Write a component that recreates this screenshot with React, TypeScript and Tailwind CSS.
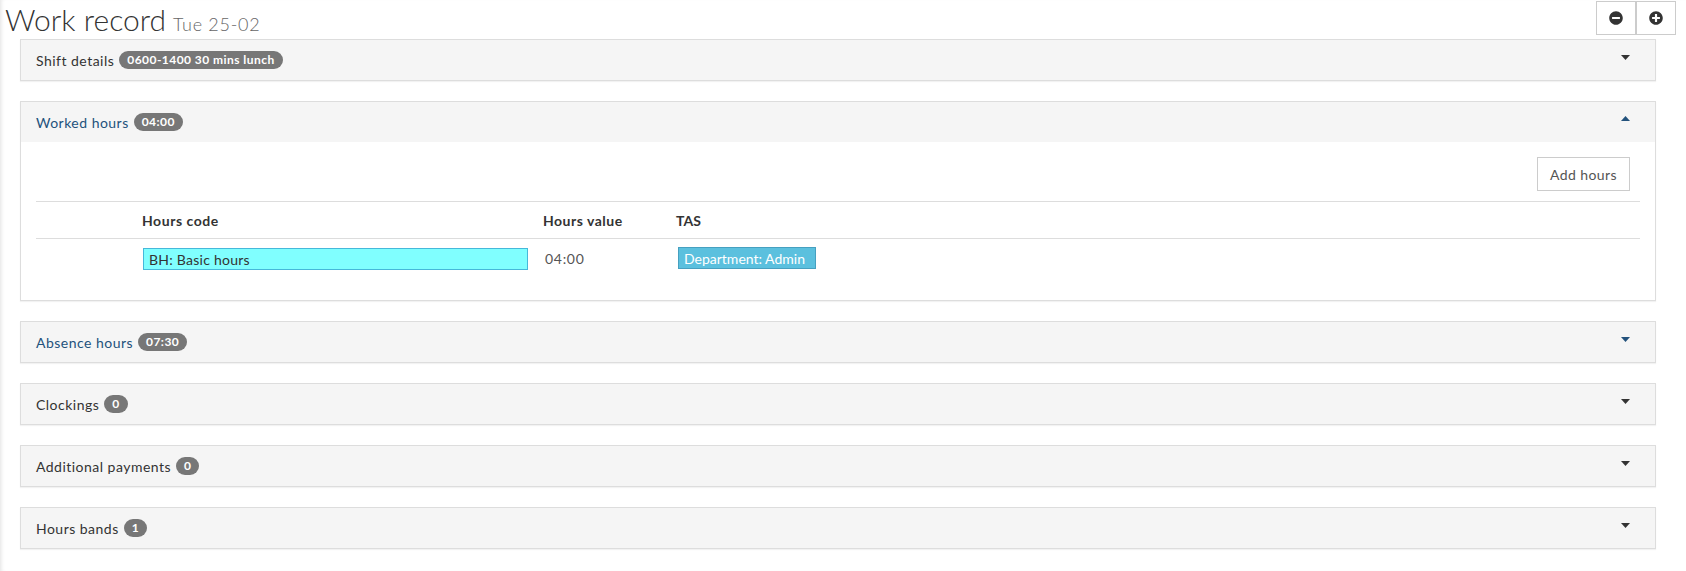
import React from "react";
import { FaMinusCircle, FaPlusCircle } from "react-icons/fa";

function Caret({ up, blue }: { up?: boolean; blue?: boolean }) {
  return (
    <svg width="9" height="5" viewBox="0 0 9 5" className={blue ? "text-[#23527c]" : "text-[#333333]"}>
      <path d={up ? "M0 5L4.5 0L9 5Z" : "M0 0H9L4.5 5Z"} fill="currentColor" />
    </svg>
  );
}

function Badge({ children }: { children: React.ReactNode }) {
  return (
    <span className="ml-[5px] inline-block rounded-[10px] bg-[#777777] px-[8px] py-[3px] text-[12px] font-bold leading-[12px] tracking-[0.45px] text-white">
      {children}
    </span>
  );
}

function Heading({ label, badge, open, blue }: { label: string; badge: string; open?: boolean; blue?: boolean }) {
  return (
    <div className="flex h-10 items-start justify-between bg-[#f5f5f5] pl-[15px] pr-[25px]">
      <div className={`mt-[10px] flex h-5 items-center text-[14px] ${blue ? "text-[#23527c]" : "text-[#333333]"}`}>
        <span className="tracking-[0.48px]">{label}</span>
        <Badge>{badge}</Badge>
      </div>
      <div className={open ? "mt-[14px]" : "mt-[15px]"}>
        <Caret up={open} blue={blue} />
      </div>
    </div>
  );
}

function Panel({ children }: { children: React.ReactNode }) {
  return (
    <section className="mb-5 border border-[#dddddd] bg-white shadow-[0_1px_1px_rgba(0,0,0,0.05)]">{children}</section>
  );
}

export default function App() {
  return (
    <div className="h-[571px] w-[1686px] overflow-hidden bg-white pl-[20px] pr-[30px] font-['Lato','Liberation_Sans',sans-serif] text-[14px] text-[#333333] shadow-[inset_4px_0_4px_-3px_rgba(0,0,0,0.12)]">
      <header className="-ml-[14px] -mr-[20px] flex h-[39px] items-start justify-between">
        <h1 className="mt-[1px] -ml-[1px] text-[30px] font-light leading-[36px] text-[#333333]">
          Work record
          <small className="ml-[7px] text-[18px] font-light tracking-[0.7px] text-[#666666]">Tue 25-02</small>
        </h1>
        <div className="mt-[1px] flex">
          <button className="flex h-[34px] w-10 items-center justify-center border border-[#cccccc] bg-white text-[14px] text-[#333333]">
            <FaMinusCircle />
          </button>
          <button className="flex h-[34px] w-10 items-center justify-center border border-[#cccccc] bg-white text-[14px] text-[#333333]">
            <FaPlusCircle />
          </button>
        </div>
      </header>

      <Panel>
        <Heading label="Shift details" badge="0600-1400 30 mins lunch" />
      </Panel>

      <Panel>
        <Heading label="Worked hours" badge="04:00" open blue />
        <div className="h-[158px] px-[15px] pt-[15px]">
          <div className="flex h-[44px] items-start justify-end pr-[10px]">
            <button className="h-[34px] w-[93px] border border-[#cccccc] bg-white text-[14px] tracking-[0.4px] text-[#555555]">
              Add hours
            </button>
          </div>
          <div className="grid h-[38px] grid-cols-[106px_401px_133px_1fr] items-center border-y border-[#dddddd] font-bold">
            <span className="col-start-2 tracking-[0.55px]">Hours code</span>
            <span className="tracking-[0.5px]">Hours value</span>
            <span className="tracking-[0.1px]">TAS</span>
          </div>
          <div className="grid grid-cols-[106px_401px_133px_1fr] pt-[8px]">
            <div className="col-start-2 mt-[1px] ml-[1px] flex h-[22px] w-[385px] items-center border border-[#46b8da] bg-[#80ffff] pl-[5px] tracking-[0.25px] text-[#333333]">
              BH: Basic hours
            </div>
            <span className="ml-[2px] flex h-[22px] items-center tracking-[0.7px] text-[#555555]">04:00</span>
            <div className="ml-[2px] flex h-[22px] w-[138px] items-center border border-[#46a0c0] bg-[#5bc0de] pl-[5px] text-white">
              Department: Admin
            </div>
          </div>
        </div>
      </Panel>

      <Panel>
        <Heading label="Absence hours" badge="07:30" blue />
      </Panel>
      <Panel>
        <Heading label="Clockings" badge="0" />
      </Panel>
      <Panel>
        <Heading label="Additional payments" badge="0" />
      </Panel>
      <Panel>
        <Heading label="Hours bands" badge="1" />
      </Panel>
    </div>
  );
}
